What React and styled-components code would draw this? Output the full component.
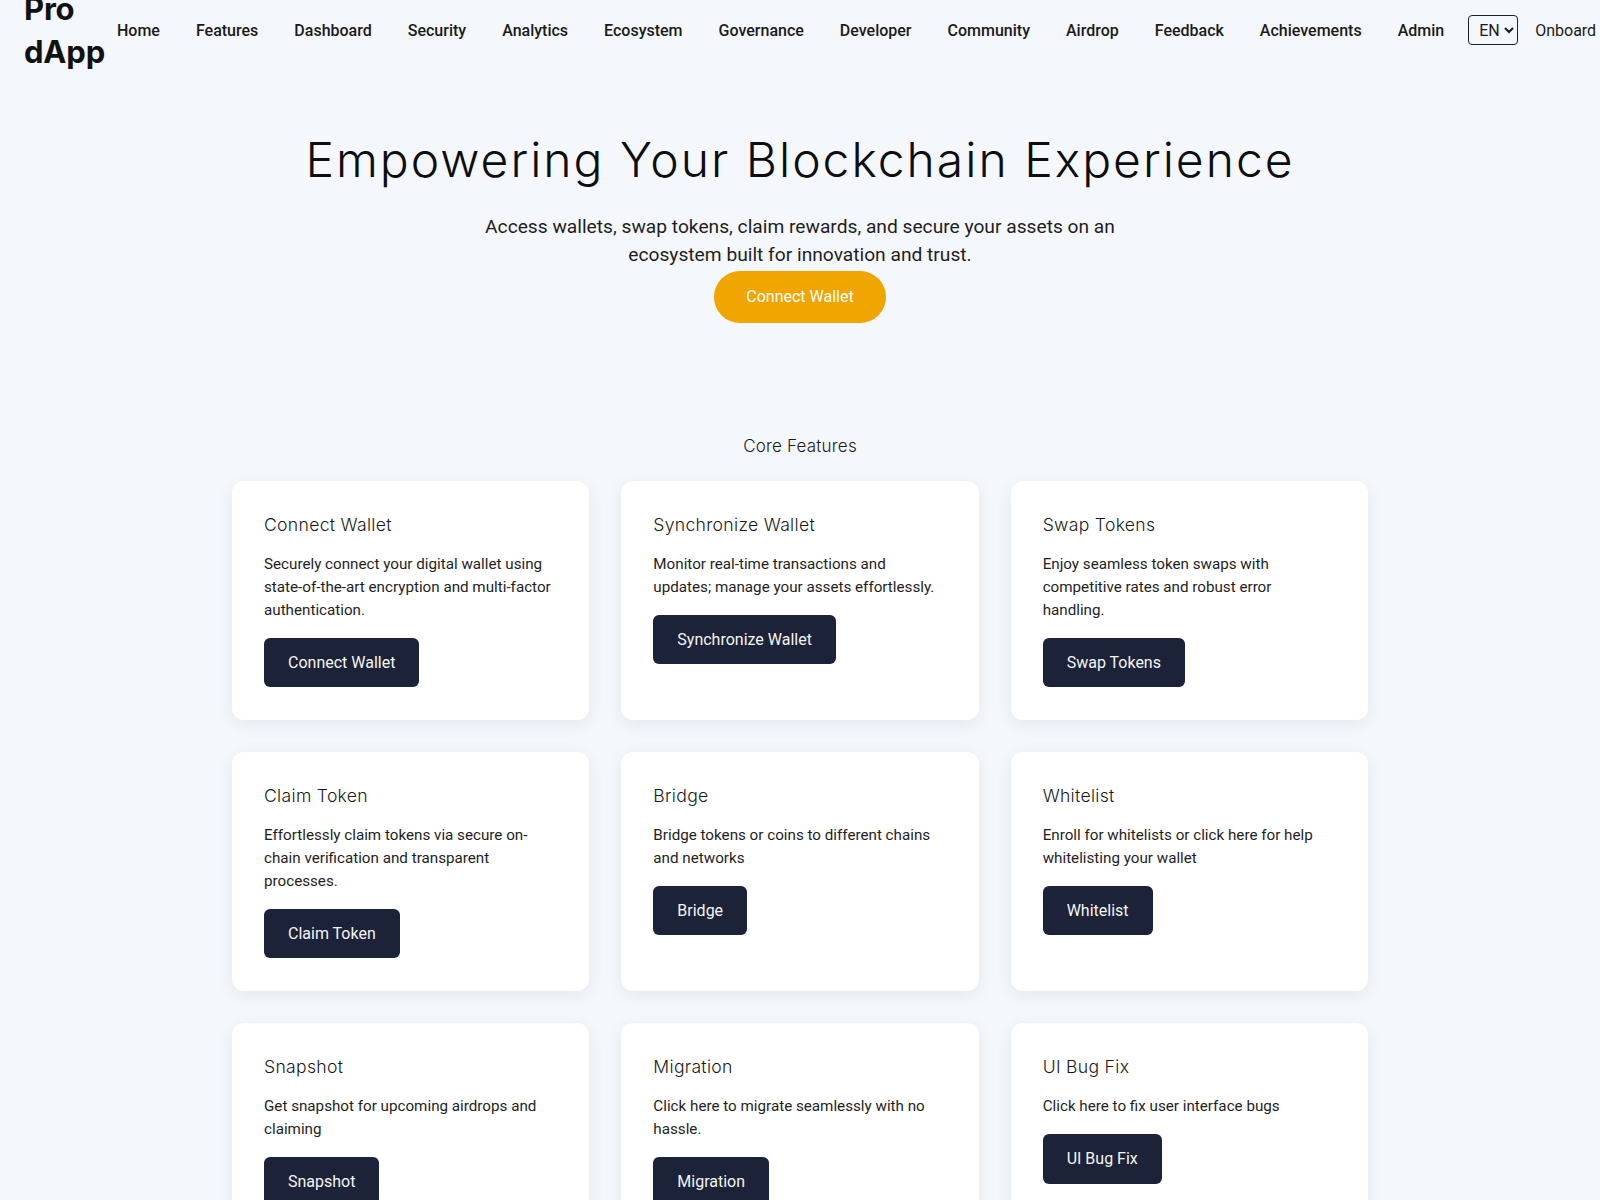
import React from 'react';
import styled, { createGlobalStyle } from 'styled-components';

const GlobalStyle = createGlobalStyle`
  * { box-sizing: border-box; }
  html, body { margin: 0; padding: 0; }
  body {
    background: #f4f7fb;
    font-family: Roboto, "Liberation Sans", sans-serif;
    color: #222;
    overflow-x: hidden;
  }
`;

const Header = styled.header`
  display: flex;
  align-items: center;
  height: 60px;
  padding-left: 24px;
  width: max-content;
  white-space: nowrap;
`;

const Logo = styled.div`
  flex: 0 0 80px;
  width: 80px;
  white-space: normal;
  font-family: Inter, "Open Sans", sans-serif;
  font-weight: 700;
  font-size: 31px;
  line-height: 43px;
  color: #111;
  letter-spacing: -0.2px;
`;

const NavList = styled.ul`
  display: flex;
  align-items: center;
  gap: 36px;
  list-style: none;
  margin: 0 0 0 13px;
  padding: 0;
`;

const NavLink = styled.a`
  font-family: Roboto, sans-serif;
  font-weight: 500;
  font-size: 16px;
  color: #1a1a1a;
  text-decoration: none;
`;

const LangSelect = styled.select`
  margin-left: 24px;
  height: 30px;
  width: 50px;
  padding: 0 2px 0 6px;
  font-family: Roboto, sans-serif;
  font-size: 16px;
  color: #1a1a1a;
  background: transparent;
  border: 1px solid #222;
  border-radius: 4px;
`;

const Onboard = styled.button`
  margin-left: 17px;
  padding: 0;
  border: none;
  background: none;
  font-family: Roboto, sans-serif;
  font-size: 16px;
  font-weight: 400;
  color: #1a1a1a;
`;

const Hero = styled.section`
  display: flex;
  flex-direction: column;
  align-items: center;
  text-align: center;
  padding-top: 71px;
`;

const HeroTitle = styled.h1`
  margin: 0 0 24px;
  font-family: Inter, "Open Sans", sans-serif;
  font-weight: 300;
  font-size: 48px;
  line-height: 1.2;
  letter-spacing: 2px;
  color: #0d0d0d;
`;

const HeroText = styled.p`
  margin: 0;
  max-width: 680px;
  font-size: 19.2px;
  line-height: 1.5;
  color: #1e1e1e;
`;

const PrimaryButton = styled.button`
  margin-top: 1px;
  padding: 13px 32px;
  line-height: 26px;
  border: none;
  border-radius: 999px;
  background: #f0a500;
  color: #fff;
  font-family: Roboto, sans-serif;
  font-size: 16px;
`;

const Features = styled.section`
  max-width: 1200px;
  margin: 0 auto;
  padding: 112px 32px 0;
`;

const SectionTitle = styled.h2`
  margin: 0 0 24px;
  text-align: center;
  font-family: Inter, "Open Sans", sans-serif;
  font-weight: 300;
  font-size: 17px;
  line-height: 22px;
  letter-spacing: 0.2px;
  color: #1a1a1a;
`;

const Grid = styled.div`
  display: grid;
  grid-template-columns: repeat(3, 1fr);
  gap: 32px;
`;

const Card = styled.div`
  display: flex;
  flex-direction: column;
  align-items: flex-start;
  padding: 33px 36px 33px 32px;
  background: #fff;
  border-radius: 12px;
  box-shadow: 0 4px 18px rgba(20, 40, 80, 0.07);
`;

const CardTitle = styled.h3`
  margin: 0 0 17px;
  font-family: Inter, "Open Sans", sans-serif;
  font-weight: 300;
  font-size: 17.6px;
  line-height: 22px;
  letter-spacing: 0.3px;
  color: #1a1a1a;
`;

const CardText = styled.p`
  margin: 0 0 16px;
  font-size: 15.2px;
  line-height: 1.5;
  color: #1e1e1e;
`;

const CardButton = styled.button`
  padding: 12px 24px;
  line-height: 25.6px;
  border: none;
  border-radius: 6px;
  background: #1c2237;
  color: #f5f5f5;
  font-family: Roboto, sans-serif;
  font-size: 16px;
`;

const navItems = [
  'Home', 'Features', 'Dashboard', 'Security', 'Analytics', 'Ecosystem',
  'Governance', 'Developer', 'Community', 'Airdrop', 'Feedback', 'Achievements', 'Admin',
];

const features = [
  { title: 'Connect Wallet', text: 'Securely connect your digital wallet using state-of-the-art encryption and multi-factor authentication.' },
  { title: 'Synchronize Wallet', text: 'Monitor real-time transactions and updates; manage your assets effortlessly.' },
  { title: 'Swap Tokens', text: 'Enjoy seamless token swaps with competitive rates and robust error handling.' },
  { title: 'Claim Token', text: 'Effortlessly claim tokens via secure on-chain verification and transparent processes.' },
  { title: 'Bridge', text: 'Bridge tokens or coins to different chains and networks' },
  { title: 'Whitelist', text: 'Enroll for whitelists or click here for help whitelisting your wallet' },
  { title: 'Snapshot', text: 'Get snapshot for upcoming airdrops and claiming' },
  { title: 'Migration', text: 'Click here to migrate seamlessly with no hassle.' },
  { title: 'UI Bug Fix', text: 'Click here to fix user interface bugs' },
];

export default function App() {
  return (
    <>
      <GlobalStyle />
      <Header>
        <Logo>Pro dApp</Logo>
        <NavList>
          {navItems.map((item) => (
            <li key={item}><NavLink href="#">{item}</NavLink></li>
          ))}
        </NavList>
        <LangSelect defaultValue="EN">
          <option value="EN">EN</option>
        </LangSelect>
        <Onboard>Onboard</Onboard>
      </Header>
      <Hero>
        <HeroTitle>Empowering Your Blockchain Experience</HeroTitle>
        <HeroText>
          Access wallets, swap tokens, claim rewards, and secure your assets on an ecosystem built for innovation and trust.
        </HeroText>
        <PrimaryButton>Connect Wallet</PrimaryButton>
      </Hero>
      <Features>
        <SectionTitle>Core Features</SectionTitle>
        <Grid>
          {features.map((f) => (
            <Card key={f.title}>
              <CardTitle>{f.title}</CardTitle>
              <CardText>{f.text}</CardText>
              <CardButton>{f.title}</CardButton>
            </Card>
          ))}
        </Grid>
      </Features>
    </>
  );
}
